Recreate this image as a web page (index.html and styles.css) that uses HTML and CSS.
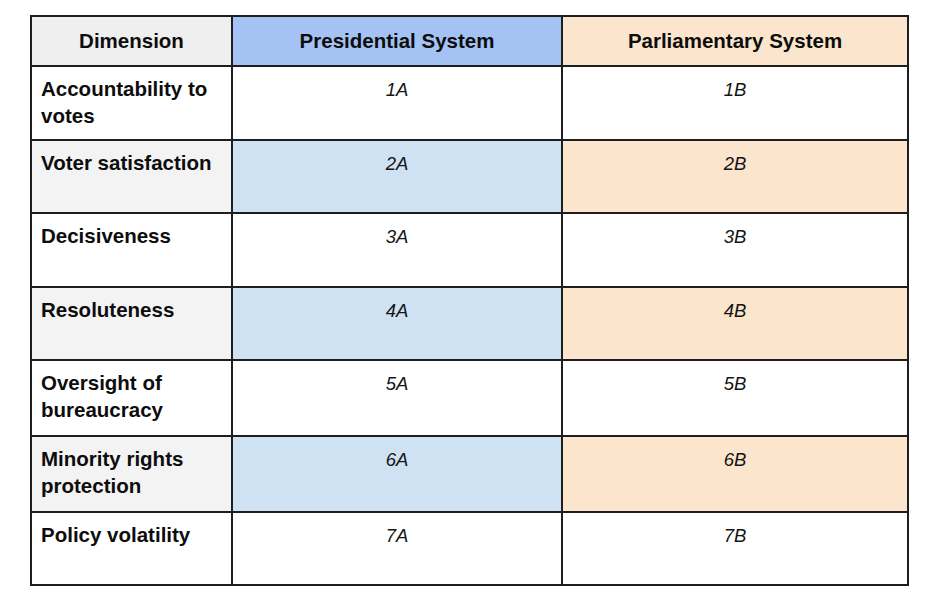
FILE: index.html
```html
<!DOCTYPE html>
<html>
<head>
<meta charset="utf-8">
<link rel="stylesheet" href="styles.css">
</head>
<body>
<div class="table">
  <div class="cell head grey">Dimension</div>
  <div class="cell head blue-h">Presidential System</div>
  <div class="cell head orange">Parliamentary System</div>

  <div class="cell dim white">Accountability to votes</div>
  <div class="cell val white">1A</div>
  <div class="cell val white">1B</div>

  <div class="cell dim grey2">Voter satisfaction</div>
  <div class="cell val blue">2A</div>
  <div class="cell val orange">2B</div>

  <div class="cell dim white">Decisiveness</div>
  <div class="cell val white">3A</div>
  <div class="cell val white">3B</div>

  <div class="cell dim grey2">Resoluteness</div>
  <div class="cell val blue">4A</div>
  <div class="cell val orange">4B</div>

  <div class="cell dim white">Oversight of bureaucracy</div>
  <div class="cell val white">5A</div>
  <div class="cell val white">5B</div>

  <div class="cell dim grey2">Minority rights protection</div>
  <div class="cell val blue">6A</div>
  <div class="cell val orange">6B</div>

  <div class="cell dim white">Policy volatility</div>
  <div class="cell val white">7A</div>
  <div class="cell val white">7B</div>
</div>
</body>
</html>
```

FILE: styles.css
```css
html, body {
  margin: 0;
  padding: 0;
  background: #ffffff;
}

body {
  font-family: "Liberation Sans", Arial, sans-serif;
  color: #0d0d0d;
  padding: 15px 0 0 30px;
}

.table {
  display: grid;
  width: 879px;
  box-sizing: border-box;
  grid-template-columns: 199px 328px 344px;
  grid-template-rows: 48px 72px 71px 72px 71px 74px 74px 71px;
  gap: 2px;
  padding: 2px;
  background: #1e1e1e;
}

.cell {
  box-sizing: border-box;
  line-height: 27px;
}

.head {
  font-weight: bold;
  font-size: 20.5px;
  display: flex;
  align-items: center;
  justify-content: center;
  padding-bottom: 2px;
}

.dim {
  font-weight: bold;
  font-size: 20.5px;
  padding: 8px 9px 0 9px;
}

.val {
  font-style: italic;
  font-size: 18.5px;
  text-align: center;
  padding-top: 9px;
  color: #151515;
}

.white { background: #ffffff; }
.grey { background: #efefef; }
.grey2 { background: #f3f3f3; }
.blue-h { background: #a4c2f4; }
.blue { background: #cfe2f3; }
.orange { background: #fce5cd; }
```
